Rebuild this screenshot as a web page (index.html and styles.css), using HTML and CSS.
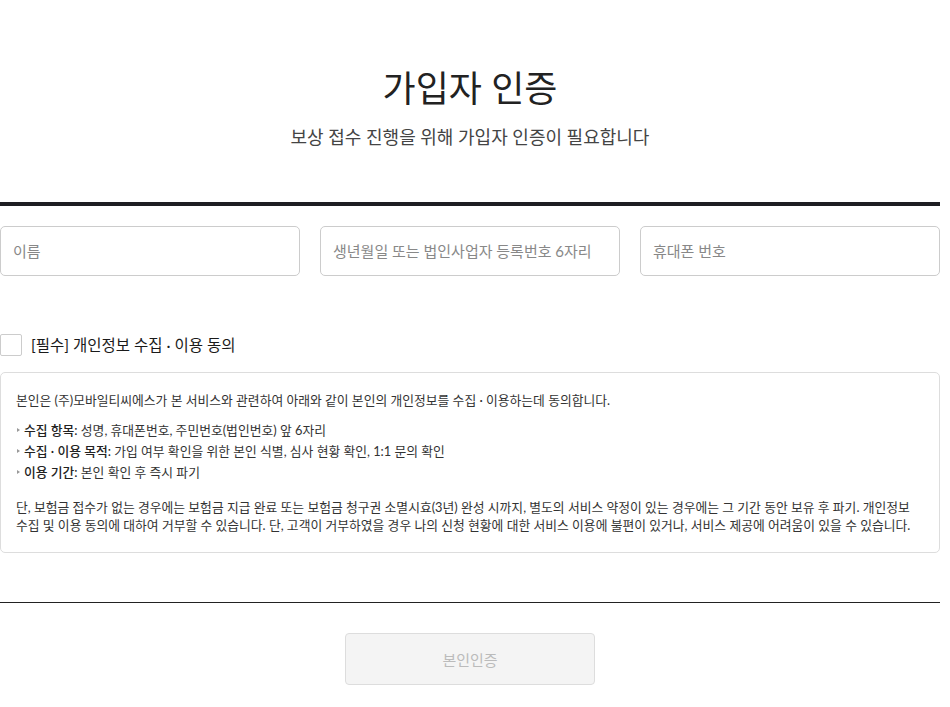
FILE: index.html
```html
<!DOCTYPE html>
<html lang="ko">
<head>
    <meta charset="UTF-8">
    <meta name="viewport" content="width=device-width, initial-scale=1.0">
    <title>가입자 인증</title>
    <link rel="stylesheet" href="styles.css">
</head>
<body>
    <div class="page">
        <header class="intro">
            <h1>가입자 인증</h1>
            <p class="subtitle">보상 접수 진행을 위해 가입자 인증이 필요합니다</p>
        </header>

        <form class="auth-form">
            <div class="fields">
                <input type="text" class="field" placeholder="이름">
                <input type="text" class="field" placeholder="생년월일 또는 법인사업자 등록번호 6자리">
                <input type="tel" class="field" placeholder="휴대폰 번호">
            </div>

            <label class="agree">
                <input type="checkbox" class="agree-check">
                <span class="agree-box"></span>
                <span class="agree-text">[필수] 개인정보 수집 · 이용 동의</span>
            </label>

            <div class="terms">
                <p class="terms-lead">본인은 (주)모바일티씨에스가 본 서비스와 관련하여 아래와 같이 본인의 개인정보를 수집 · 이용하는데 동의합니다.</p>
                <ul class="terms-list">
                    <li><strong>수집 항목:</strong> 성명, 휴대폰번호, 주민번호(법인번호) 앞 6자리</li>
                    <li><strong>수집 · 이용 목적:</strong> 가입 여부 확인을 위한 본인 식별, 심사 현황 확인, 1:1 문의 확인</li>
                    <li><strong>이용 기간:</strong> 본인 확인 후 즉시 파기</li>
                </ul>
                <p class="terms-note">단, 보험금 접수가 없는 경우에는 보험금 지급 완료 또는 보험금 청구권 소멸시효(3년) 완성 시까지, 별도의 서비스 약정이 있는 경우에는 그 기간 동안 보유 후 파기. 개인정보 수집 및 이용 동의에 대하여 거부할 수 있습니다. 단, 고객이 거부하였을 경우 나의 신청 현황에 대한 서비스 이용에 불편이 있거나, 서비스 제공에 어려움이 있을 수 있습니다.</p>
            </div>

            <div class="actions">
                <button type="button" class="submit" disabled>본인인증</button>
            </div>
        </form>
    </div>
</body>
</html>
```

FILE: styles.css
```css
body {
    margin: 0;
    background: #fff;
    color: #222;
    font-family: Lato, "Noto Sans CJK KR", sans-serif;
    word-break: keep-all;
}
.page {
    width: 940px;
}
.intro {
    padding-top: 64px;
    text-align: center;
}
.intro h1 {
    margin: 0;
    font-size: 36px;
    line-height: 48px;
    font-weight: 400;
    color: #222;
}
.subtitle {
    margin: 13px 0 0;
    font-size: 18px;
    line-height: 24px;
    color: #444;
}
.auth-form {
    margin-top: 53px;
    border-top: 4px solid #1e1e22;
}
.fields {
    display: grid;
    grid-template-columns: repeat(3, 1fr);
    gap: 20px;
    margin-top: 20px;
}
.field {
    height: 50px;
    box-sizing: border-box;
    border: 1px solid #ccc;
    border-radius: 5px;
    padding: 0 12px;
    font-family: inherit;
    font-size: 15px;
    color: #222;
}
.field::placeholder {
    color: #888;
}
.agree {
    display: flex;
    align-items: center;
    margin-top: 58px;
    cursor: pointer;
}
.agree-check {
    display: none;
}
.agree-box {
    width: 22px;
    height: 22px;
    box-sizing: border-box;
    border: 1px solid #ccc;
    border-radius: 2px;
    margin-right: 9px;
}
.agree-text {
    font-size: 15.5px;
    line-height: 22px;
    font-weight: 400;
    color: #1a1a1a;
}
.terms {
    margin-top: 16px;
    border: 1px solid #ddd;
    border-radius: 5px;
    padding: 18px 12px 18px 15px;
    font-size: 12.8px;
    color: #333;
}
.terms p {
    margin: 0;
}
.terms-lead {
    line-height: 18px;
}
.terms-list {
    list-style: none;
    margin: 11px 0 0;
    padding: 0;
}
.terms-list li {
    position: relative;
    padding-left: 8px;
    line-height: 21px;
}
.terms-list li::before {
    content: "";
    position: absolute;
    left: 1px;
    top: 8px;
    border-left: 3px solid #999;
    border-top: 2.5px solid transparent;
    border-bottom: 2.5px solid transparent;
}
.terms-list strong {
    font-weight: 500;
    color: #222;
}
.terms-note {
    margin-top: 15px !important;
    line-height: 18px;
}
.actions {
    margin-top: 49px;
    border-top: 1px solid #222;
    padding-top: 30px;
    display: flex;
    justify-content: center;
}
.submit {
    width: 250px;
    height: 52px;
    border: 1px solid #ddd;
    border-radius: 4px;
    background: #f4f4f4;
    color: #bbb;
    font-family: inherit;
    font-size: 15px;
}
```
